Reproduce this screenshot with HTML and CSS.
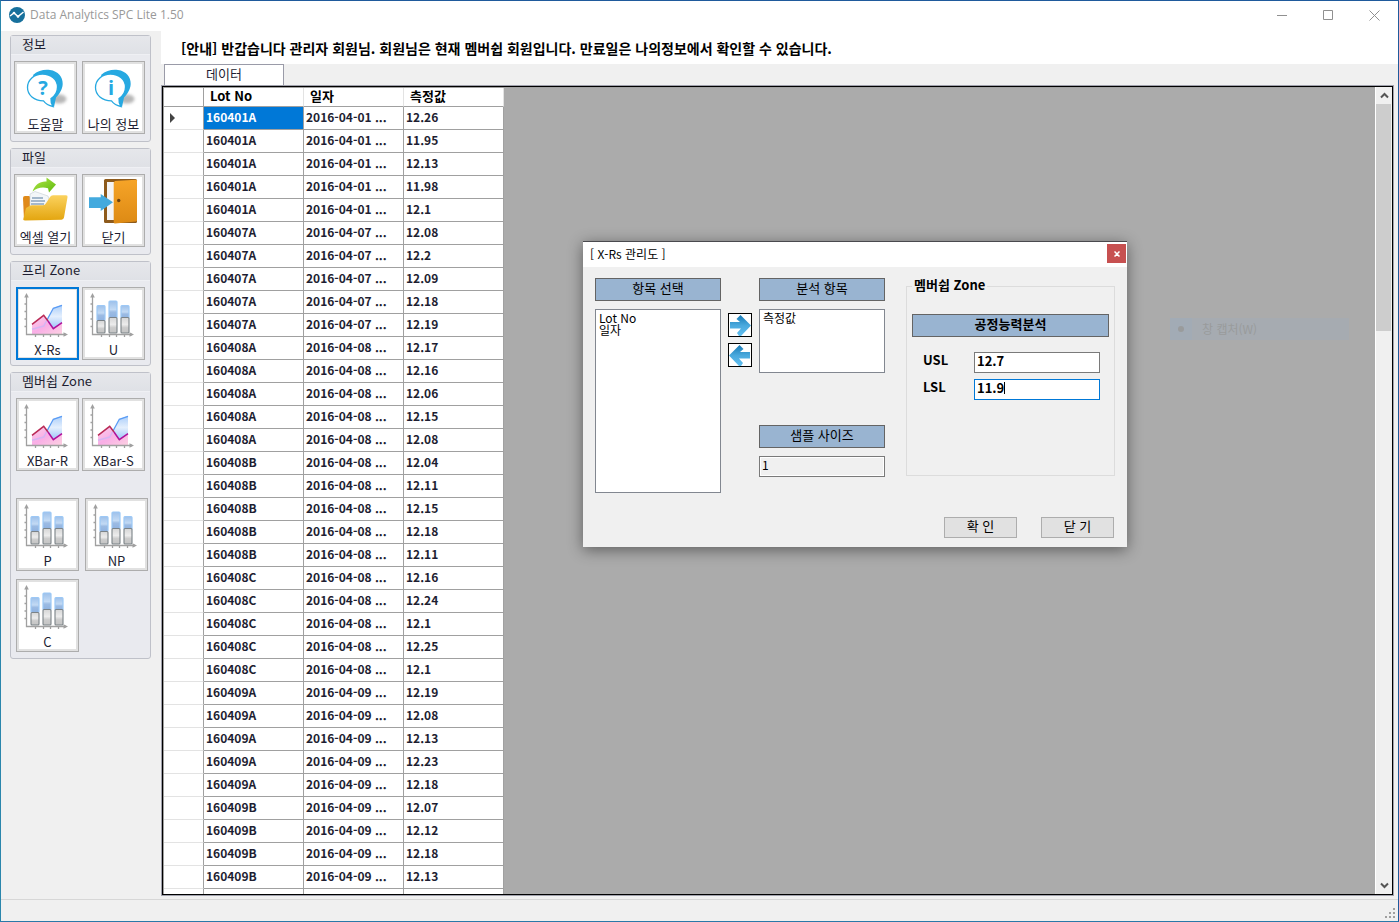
FILE: index.html
```html
<!DOCTYPE html>
<html lang="ko">
<head>
<meta charset="utf-8">
<title>Data Analytics SPC Lite 1.50</title>
<link rel="stylesheet" href="styles.css">
</head>
<body>
<svg class="defs" aria-hidden="true">
  <defs>
    <linearGradient id="g-blue" x1="0" y1="0" x2="0" y2="1"><stop offset="0" stop-color="#9dc0ea"/><stop offset=".5" stop-color="#c3daf4"/><stop offset=".65" stop-color="#9cbbe3"/><stop offset="1" stop-color="#8fb2e0"/></linearGradient>
    <linearGradient id="g-gray" x1="0" y1="0" x2="0" y2="1"><stop offset="0" stop-color="#d6d6d6"/><stop offset=".45" stop-color="#ececec"/><stop offset=".65" stop-color="#cccccc"/><stop offset="1" stop-color="#c4c4c4"/></linearGradient>
    <linearGradient id="g-area" x1="0" y1="0" x2="0" y2="1"><stop offset="0" stop-color="#a9cdfa"/><stop offset=".4" stop-color="#e4effd"/><stop offset=".8" stop-color="#9fc6f9"/></linearGradient>
    <linearGradient id="g-pink" x1="0" y1="0" x2="1" y2="1"><stop offset="0" stop-color="#fbd3ea"/><stop offset=".5" stop-color="#f9aee6"/><stop offset="1" stop-color="#fcd0e2"/></linearGradient>
    <linearGradient id="g-folder" x1="0" y1="0" x2="0" y2="1"><stop offset="0" stop-color="#fbd25e"/><stop offset="1" stop-color="#e3a50f"/></linearGradient>
    <linearGradient id="g-green" x1="0" y1="0" x2="1" y2="1"><stop offset="0" stop-color="#b4e84a"/><stop offset="1" stop-color="#5cb80c"/></linearGradient>
    <linearGradient id="g-door" x1="0" y1="0" x2="0" y2="1"><stop offset="0" stop-color="#f6a428"/><stop offset="1" stop-color="#dd8a14"/></linearGradient>
    <linearGradient id="g-arrow" x1="0" y1="0" x2="0" y2="1"><stop offset="0" stop-color="#1779b5"/><stop offset=".5" stop-color="#4aa9dd"/><stop offset="1" stop-color="#62bff0"/></linearGradient>
    <filter id="soft" x="-50%" y="-50%" width="200%" height="200%"><feGaussianBlur stdDeviation="1.5"/></filter>
    <symbol id="axes" viewBox="3 3 57 51">
      <path d="M10.500 9V47.500H50M8.500 17h2M8.500 24.500h2M8.500 32h2M8.500 39.500h2M19.500 48v2M27.500 48v2M34.500 48v2M42.500 48v2" fill="none" stroke="#a0a0a0" stroke-width="1.300"/>
      <path d="M10.500 6l2.300 4.500H8.200zM52 47.500l-4.500-2.300v4.600z" fill="#a0a0a0"/>
    </symbol>
    <symbol id="line-chart" viewBox="3 3 57 51">
      <path d="M27.700 39 37.300 21.300 46 17.700V47H27z" fill="url(#g-area)"/>
      <path d="M16 37.300 27.700 28.300 37.300 41.700 46 35.700V47H16z" fill="url(#g-pink)"/>
      <path d="M16 42.300 27.700 39 31 33" fill="none" stroke="#d5b6f2" stroke-width="1.500"/>
      <path d="M31 33 37.300 21.300 46 18.300" fill="none" stroke="#5a9cf4" stroke-width="1.300"/>
      <path d="M16 37.300 27.700 28.300 32 34" fill="none" stroke="#b92a56" stroke-width="1.500"/>
      <path d="M32 34 37.300 41.700 46 35.700" fill="none" stroke="#b0109a" stroke-width="1.500"/>
      <use href="#axes" x="3" y="3" width="57" height="51"/>
    </symbol>
    <symbol id="bar-chart" viewBox="3 3 57 51">
      <g fill="url(#g-blue)" stroke="#9cc8f6" stroke-width="1.200">
        <rect x="15" y="18.500" width="8" height="15" rx="1"/><rect x="27" y="14" width="8" height="17" rx="1"/><rect x="39" y="18.500" width="8" height="13" rx="1"/>
      </g>
      <g fill="url(#g-gray)" stroke="#7b8388" stroke-width="1.100">
        <rect x="15" y="33.500" width="8" height="12.500" rx="1"/><rect x="27" y="30.500" width="8" height="15.500" rx="1"/><rect x="39" y="30.500" width="8" height="15.500" rx="1"/>
      </g>
      <use href="#axes" x="3" y="3" width="57" height="51"/>
    </symbol>
    <symbol id="bubble" viewBox="3 3 57 51">
      <ellipse cx="45" cy="38" rx="7.500" ry="4.500" fill="#999" opacity=".7" filter="url(#soft)"/>
      <path d="M19 14C24 9.500 30 8.300 36 9 44 10 49 16 48.700 23 48.500 29 44.500 34 42 36.500L40 46 30 38z" fill="#27a9e1"/>
      <path d="M28.500 13C37 13 43.500 18.500 43.500 26 43.500 31 41 35 37 37.500 36.700 40.500 37.500 43 39 45.500 34.500 44.500 31.500 42.500 29.500 39.800 20 39.800 13.500 34 13.500 26.500S20 13 28.500 13z" fill="#fff" stroke="#27a9e1" stroke-width="1.300"/>
    </symbol>
    <symbol id="folder" viewBox="3 3 57 51">
      <path d="M9 24q0-2 2-2h4l3 2v20l-8 2z" fill="#e08a1a"/>
      <path d="M16 20 21 17.500 34 22 37 32 16 37z" fill="#f3f6f9" stroke="#c4ccd4" stroke-width=".6"/>
      <path d="M18 24h11M17 27h14M17 30h13" stroke="#8aa4bd" stroke-width="1.300"/>
      <path d="M12 34 15.500 32q1-.8 2.500-.8H29q2 0 3-2L36 23q1-1.700 3-1.700H52q2 0 1.500 2L50 43.500q-.4 2-2.500 2.300L11 46.500q-2.300 0-1.500-2.200z" fill="url(#g-folder)"/>
      <path d="M18.500 17.500C21 10.500 26 7 32.500 7.500V3.600L42 10.500 35 18.500 34 14.300C28 12.500 23 14 18.500 17.500z" fill="url(#g-green)"/>
    </symbol>
    <symbol id="door" viewBox="3 3 57 51">
      <rect x="22" y="5" width="33" height="44" rx="1.500" fill="#8d5a1c"/>
      <rect x="25" y="8" width="15" height="38" fill="#f4f4f6"/>
      <path d="M31.700 8.500 33 7 54 5.800q1 0 1 1V46.500q0 1-1 1L33 49.500q-1.300 0-1.300-1.500z" fill="url(#g-door)"/>
      <circle cx="36.700" cy="26.500" r="1.700" fill="#6b4212"/>
      <path d="M7 23.300H18.700V20L31 28.300 18.700 37V34H7z" fill="#44aade"/>
    </symbol>
    <symbol id="arrow" viewBox="0 0 22 22">
      <path d="M1 8H11L7.500 5 11.500 1 22 11.500 12 22H10L8 19 12 14.500H1z" fill="url(#g-arrow)"/>
    </symbol>
  </defs>
</svg>

<div class="app">
  <header class="titlebar">
    <svg class="logo" viewBox="0 0 16 16" aria-hidden="true"><circle cx="8" cy="8" r="8" fill="#17709c"/><path d="M1 9 5 6 9 9.500 14.500 5" fill="none" stroke="#fff" stroke-width="1.500"/><circle cx="5" cy="6" r="1.300" fill="#fff"/><circle cx="9" cy="9.500" r="1.300" fill="#fff"/></svg>
    <h1 class="app-title">Data Analytics SPC Lite 1.50</h1>
    <div class="window-buttons">
      <button class="win-btn" aria-label="최소화"><svg viewBox="0 0 11 11"><path d="M0 5.500h10" /></svg></button>
      <button class="win-btn" aria-label="최대화"><svg viewBox="0 0 11 11"><path d="M.5.5h9v9h-9z"/></svg></button>
      <button class="win-btn" aria-label="닫기"><svg viewBox="0 0 11 11"><path d="M.5.5l10 10M10.500.5l-10 10"/></svg></button>
    </div>
  </header>

  <div class="workspace">
    <nav class="sidebar">
      <section class="group">
        <h2 class="group-title">정보</h2>
        <div class="tools">
          <button class="tool"><svg class="tool-icon" viewBox="3 3 57 51"><use href="#bubble" x="3" y="3" width="57" height="51"/><text class="bubble-mark" x="29" y="34">?</text></svg>도움말</button>
          <button class="tool"><svg class="tool-icon" viewBox="3 3 57 51"><use href="#bubble" x="3" y="3" width="57" height="51"/><text class="bubble-mark" x="29" y="34">i</text></svg>나의 정보</button>
        </div>
      </section>
      <section class="group">
        <h2 class="group-title">파일</h2>
        <div class="tools">
          <button class="tool"><svg class="tool-icon"><use href="#folder"/></svg>엑셀 열기</button>
          <button class="tool"><svg class="tool-icon"><use href="#door"/></svg>닫기</button>
        </div>
      </section>
      <section class="group group-zone">
        <h2 class="group-title">프리 Zone</h2>
        <div class="tools">
          <button class="tool active"><svg class="tool-icon"><use href="#line-chart"/></svg>X-Rs</button>
          <button class="tool"><svg class="tool-icon"><use href="#bar-chart"/></svg>U</button>
        </div>
      </section>
      <section class="group group-zone group-member">
        <h2 class="group-title">멤버쉽 Zone</h2>
        <div class="tools">
          <button class="tool"><svg class="tool-icon"><use href="#line-chart"/></svg>XBar-R</button>
          <button class="tool"><svg class="tool-icon"><use href="#line-chart"/></svg>XBar-S</button>
        </div>
        <div class="tools tools-attribute">
          <button class="tool"><svg class="tool-icon"><use href="#bar-chart"/></svg>P</button>
          <button class="tool"><svg class="tool-icon"><use href="#bar-chart"/></svg>NP</button>
          <button class="tool"><svg class="tool-icon"><use href="#bar-chart"/></svg>C</button>
        </div>
      </section>
    </nav>

    <main class="content">
      <p class="notice">[안내] 반갑습니다 관리자 회원님. 회원님은 현재 멤버쉽 회원입니다. 만료일은 나의정보에서 확인할 수 있습니다.</p>
      <div class="tabs" role="tablist"><button class="tab" role="tab" aria-selected="true">데이터</button></div>
      <div class="grid-frame">
        <div class="grid-view">
          <table class="grid">
            <thead><tr><th class="row-head"></th><th>Lot No</th><th>일자</th><th>측정값</th></tr></thead>
            <tbody>
              <tr><td class="row-head current"><svg viewBox="0 0 5 10"><path d="M0 0l5 5-5 5z"/></svg></td><td class="selected">160401A</td><td>2016-04-01 ...</td><td>12.26</td></tr>
              <tr><td class="row-head"></td><td>160401A</td><td>2016-04-01 ...</td><td>11.95</td></tr>
              <tr><td class="row-head"></td><td>160401A</td><td>2016-04-01 ...</td><td>12.13</td></tr>
              <tr><td class="row-head"></td><td>160401A</td><td>2016-04-01 ...</td><td>11.98</td></tr>
              <tr><td class="row-head"></td><td>160401A</td><td>2016-04-01 ...</td><td>12.1</td></tr>
              <tr><td class="row-head"></td><td>160407A</td><td>2016-04-07 ...</td><td>12.08</td></tr>
              <tr><td class="row-head"></td><td>160407A</td><td>2016-04-07 ...</td><td>12.2</td></tr>
              <tr><td class="row-head"></td><td>160407A</td><td>2016-04-07 ...</td><td>12.09</td></tr>
              <tr><td class="row-head"></td><td>160407A</td><td>2016-04-07 ...</td><td>12.18</td></tr>
              <tr><td class="row-head"></td><td>160407A</td><td>2016-04-07 ...</td><td>12.19</td></tr>
              <tr><td class="row-head"></td><td>160408A</td><td>2016-04-08 ...</td><td>12.17</td></tr>
              <tr><td class="row-head"></td><td>160408A</td><td>2016-04-08 ...</td><td>12.16</td></tr>
              <tr><td class="row-head"></td><td>160408A</td><td>2016-04-08 ...</td><td>12.06</td></tr>
              <tr><td class="row-head"></td><td>160408A</td><td>2016-04-08 ...</td><td>12.15</td></tr>
              <tr><td class="row-head"></td><td>160408A</td><td>2016-04-08 ...</td><td>12.08</td></tr>
              <tr><td class="row-head"></td><td>160408B</td><td>2016-04-08 ...</td><td>12.04</td></tr>
              <tr><td class="row-head"></td><td>160408B</td><td>2016-04-08 ...</td><td>12.11</td></tr>
              <tr><td class="row-head"></td><td>160408B</td><td>2016-04-08 ...</td><td>12.15</td></tr>
              <tr><td class="row-head"></td><td>160408B</td><td>2016-04-08 ...</td><td>12.18</td></tr>
              <tr><td class="row-head"></td><td>160408B</td><td>2016-04-08 ...</td><td>12.11</td></tr>
              <tr><td class="row-head"></td><td>160408C</td><td>2016-04-08 ...</td><td>12.16</td></tr>
              <tr><td class="row-head"></td><td>160408C</td><td>2016-04-08 ...</td><td>12.24</td></tr>
              <tr><td class="row-head"></td><td>160408C</td><td>2016-04-08 ...</td><td>12.1</td></tr>
              <tr><td class="row-head"></td><td>160408C</td><td>2016-04-08 ...</td><td>12.25</td></tr>
              <tr><td class="row-head"></td><td>160408C</td><td>2016-04-08 ...</td><td>12.1</td></tr>
              <tr><td class="row-head"></td><td>160409A</td><td>2016-04-09 ...</td><td>12.19</td></tr>
              <tr><td class="row-head"></td><td>160409A</td><td>2016-04-09 ...</td><td>12.08</td></tr>
              <tr><td class="row-head"></td><td>160409A</td><td>2016-04-09 ...</td><td>12.13</td></tr>
              <tr><td class="row-head"></td><td>160409A</td><td>2016-04-09 ...</td><td>12.23</td></tr>
              <tr><td class="row-head"></td><td>160409A</td><td>2016-04-09 ...</td><td>12.18</td></tr>
              <tr><td class="row-head"></td><td>160409B</td><td>2016-04-09 ...</td><td>12.07</td></tr>
              <tr><td class="row-head"></td><td>160409B</td><td>2016-04-09 ...</td><td>12.12</td></tr>
              <tr><td class="row-head"></td><td>160409B</td><td>2016-04-09 ...</td><td>12.18</td></tr>
              <tr><td class="row-head"></td><td>160409B</td><td>2016-04-09 ...</td><td>12.13</td></tr>
              <tr><td class="row-head"></td><td></td><td></td><td></td></tr>
            </tbody>
          </table>
        </div>
        <div class="scrollbar">
          <button class="scroll-btn" aria-label="위로"><svg viewBox="0 0 9 7"><path d="M1 5.500 4.500 2 8 5.500"/></svg></button>
          <div class="scroll-track"><div class="scroll-thumb"></div></div>
          <button class="scroll-btn" aria-label="아래로"><svg viewBox="0 0 9 7"><path d="M1 1.500 4.500 5 8 1.500"/></svg></button>
        </div>
      </div>
    </main>
  </div>

  <footer class="statusbar"><svg class="grip" viewBox="0 0 11 11" aria-hidden="true"><path d="M8 0h2v2H8zM4 4h2v2H4zM8 4h2v2H8zM0 8h2v2H0zM4 8h2v2H4zM8 8h2v2H8z"/></svg></footer>

  <div class="ghost-item"><span class="ghost-mark"><span class="ghost-dot"></span></span>창 캡처(W)</div>

  <div class="dialog" role="dialog" aria-labelledby="dialog-title">
    <div class="dialog-head">
      <h2 class="dialog-title" id="dialog-title">[ X-Rs 관리도 ]</h2>
      <button class="dialog-close" aria-label="닫기"><svg viewBox="0 0 6 6"><path d="M.5.5l5 5M5.500.5l-5 5"/></svg></button>
    </div>
    <div class="dialog-body">
      <div class="column">
        <button class="caption">항목 선택</button>
        <select class="list list-source" multiple aria-label="항목 선택"><option>Lot No</option><option>일자</option></select>
      </div>
      <div class="movers">
        <button class="mover" aria-label="추가"><svg><use href="#arrow"/></svg></button>
        <button class="mover mover-back" aria-label="제거"><svg><use href="#arrow"/></svg></button>
      </div>
      <div class="column">
        <button class="caption">분석 항목</button>
        <select class="list list-target" multiple aria-label="분석 항목"><option>측정값</option></select>
        <button class="caption caption-sample">샘플 사이즈</button>
        <input class="field field-readonly" value="1" readonly aria-label="샘플 사이즈">
      </div>
      <fieldset class="member-zone">
        <legend>멤버쉽 Zone</legend>
        <button class="caption caption-bold">공정능력분석</button>
        <div class="limits">
          <label for="usl">USL</label><input class="field field-bold" id="usl" value="12.7">
          <label for="lsl">LSL</label><div class="field field-bold field-focus"><input id="lsl" value="11.9"><span class="caret"></span></div>
        </div>
      </fieldset>
    </div>
    <div class="dialog-actions">
      <button class="action">확 인</button>
      <button class="action">닫 기</button>
    </div>
  </div>
</div>
</body>
</html>
```

FILE: styles.css
```css
* {
  box-sizing: border-box;
}

body {
  margin: 0;
  font: 13px/16px "Noto Sans CJK KR", sans-serif;
  color: #1e1e32;
}

h1, h2, p {
  margin: 0;
  font-size: inherit;
  font-weight: normal;
}

button, input, select {
  margin: 0;
  padding: 0;
  border-radius: 0;
  font: inherit;
  color: inherit;
}

svg {
  display: block;
}

.defs {
  position: absolute;
  width: 0;
  height: 0;
}

.app {
  position: relative;
  display: flex;
  flex-direction: column;
  height: 100vh;
  background: #f0f0f0;
  border: 1px solid #1f5a9c;
  border-left-color: #2a86ac;
  border-bottom-color: #2a78a8;
}

/* Title bar */
.titlebar {
  display: flex;
  align-items: center;
  flex: none;
  height: 30px;
  padding: 0 1px 2px 8px;
  background: #fff;
}

.logo {
  width: 16px;
  height: 16px;
}

.app-title {
  flex: 1;
  padding-left: 5px;
  font-family: "Open Sans", sans-serif;
  font-size: 12px;
  color: #999;
}

.window-buttons {
  display: flex;
}

.win-btn {
  display: grid;
  place-items: center;
  width: 46px;
  height: 28px;
  background: none;
  border: 0;
}

.win-btn svg {
  width: 11px;
  height: 11px;
  fill: none;
  stroke: #909090;
}

/* Sidebar */
.workspace {
  display: flex;
  flex: 1;
  min-height: 0;
}

.sidebar {
  display: flex;
  flex-direction: column;
  gap: 6px;
  flex: none;
  width: 160px;
  padding: 4px 10px 0 9px;
}

.group {
  padding-bottom: 7px;
  background: #e9eaef;
  border: 1px solid #bfc1c9;
  border-radius: 3px;
}

.group-title {
  height: 19px;
  padding-left: 11px;
  background: linear-gradient(#e6e7eb, #dfe1e6);
  border-bottom: 1px solid #eff0f4;
}

.tools {
  display: flex;
  flex-wrap: wrap;
  gap: 5px;
  padding: 6px 0 0 3px;
}

.group-zone {
  padding-bottom: 5px;
}

.group-zone .tools {
  gap: 3px;
  padding-left: 5px;
}

.group-member {
  padding-bottom: 6px;
}

.group-zone .tools-attribute {
  gap: 8px 6px;
  padding-top: 27px;
}

.tool {
  display: flex;
  flex-direction: column;
  align-items: center;
  width: 63px;
  height: 73px;
  padding: 2px 2px 0;
  background: #fff;
  border: 1px solid #adadad;
  box-shadow: inset 0 0 0 2px #e1e1e1;
  line-height: 18px;
  white-space: nowrap;
}

.tool.active {
  border: 2px solid #0078d7;
  padding: 1px 1px 0;
  box-shadow: inset 0 0 0 1px #e1e1e1;
}

.tool-icon {
  flex: none;
  width: 57px;
  height: 51px;
}

.bubble-mark {
  font: bold 20px "Open Sans", sans-serif;
  fill: #27a9e1;
  text-anchor: middle;
}

/* Content */
.content {
  display: flex;
  flex-direction: column;
  flex: 1;
  min-width: 0;
  padding-bottom: 4px;
}

.notice {
  flex: none;
  height: 33px;
  padding: 9px 20px 0;
  background: #fff;
  color: #000;
  font-size: 14px;
  font-weight: bold;
}

.tabs {
  display: flex;
  flex: none;
  height: 21px;
  padding-left: 3px;
}

.tab {
  width: 120px;
  padding-bottom: 2px;
  background: #fff;
  border: 1px solid #9a9ba8;
  border-bottom: 0;
}

.grid-frame {
  display: flex;
  flex: 1;
  min-height: 0;
  margin: 1px 5px 0 1px;
  border: 1px solid #000;
  outline: 1px solid #a0a1ac;
}

.grid-view {
  flex: 1;
  overflow: hidden;
  background: #ababab;
  border-top: 1px solid #a0a0a0;
  border-left: 1px solid #a0a0a0;
}

.grid {
  border-collapse: separate;
  border-spacing: 0;
  table-layout: fixed;
  width: 340px;
  font-weight: bold;
}

.grid th {
  width: 100px;
  height: 19px;
  padding: 0 6px 2px;
  background: #fff;
  border-right: 1px solid #e3e3e3;
  border-bottom: 1px solid #a0a0a0;
  color: #000;
  text-align: left;
}

.grid td {
  height: 23px;
  padding: 0 2px 2px;
  background: #fff;
  border-right: 1px solid #a0a0a0;
  border-bottom: 1px solid #a0a0a0;
  font-size: 12px;
  white-space: nowrap;
}

.grid .row-head {
  width: 40px;
  padding: 0;
  border-right-color: #a0a0a0;
}

.grid td.row-head {
  border-bottom-color: #e3e3e3;
}

.grid .current svg {
  width: 5px;
  height: 10px;
  margin-left: 6px;
  fill: #444;
}

.grid .selected {
  background: #0078d7;
  color: #fff;
}

.scrollbar {
  display: flex;
  flex-direction: column;
  flex: none;
  width: 17px;
  background: #f0f0f0;
  border-left: 1px solid #fff;
}

.scroll-btn {
  display: grid;
  place-items: center;
  height: 17px;
  background: none;
  border: 0;
}

.scroll-btn svg {
  width: 9px;
  height: 7px;
  fill: none;
  stroke: #555;
  stroke-width: 2px;
}

.scroll-track {
  flex: 1;
}

.scroll-thumb {
  width: 15px;
  height: 29.400%;
  background: #cdcdcd;
}

.statusbar {
  display: flex;
  justify-content: flex-end;
  align-items: flex-end;
  flex: none;
  height: 22px;
  padding: 2px;
  border-top: 1px solid #d7d7d7;
}

.grip {
  width: 11px;
  height: 11px;
  fill: #a0a0a0;
}

/* Fading menu entry over the grid */
.ghost-item {
  position: absolute;
  top: 317px;
  right: 49px;
  display: flex;
  align-items: center;
  gap: 10px;
  width: 179px;
  height: 22px;
  background: #a6abb1;
  color: #999b9c;
  font-size: 12px;
}

.ghost-mark {
  display: grid;
  place-items: center;
  width: 22px;
  height: 22px;
  background: #a2abb5;
}

.ghost-dot {
  width: 6px;
  height: 6px;
  border-radius: 50%;
  background: #999b9c;
}

/* Dialog */
.dialog {
  position: absolute;
  top: 240px;
  left: 582px;
  width: 544px;
  background: #f0f0f0;
  border-top: 1px solid #4a4a4e;
  box-shadow: 0 3px 14px rgba(0, 0, 0, .45);
  color: #000;
}

.dialog-head {
  display: flex;
  justify-content: space-between;
  align-items: center;
  height: 25px;
  padding: 0 1px 2px 7px;
  background: #fff;
}

.dialog-title {
  font-size: 12px;
}

.dialog-close {
  display: grid;
  place-items: center;
  width: 19px;
  height: 19px;
  background: #c75050;
  border: 0;
}

.dialog-close svg {
  width: 6px;
  height: 6px;
  fill: none;
  stroke: #fff;
  stroke-width: 1.500px;
}

.dialog-body {
  display: flex;
  padding: 11px 12px 0;
}

.column {
  display: flex;
  flex-direction: column;
  width: 126px;
}

.caption {
  height: 23px;
  padding-bottom: 3px;
  background: #99b4d1;
  border: 1px solid #646464;
}

.list {
  margin-top: 8px;
  padding: 1px 0;
  background: #fff;
  border: 1px solid #828790;
  outline: 0;
  overflow: hidden;
}

.list option {
  display: flex;
  align-items: center;
  height: 12px;
  min-height: 12px;
  padding: 0 3px;
  font-size: 12px;
}

.list-source {
  height: 184px;
}

.list-target {
  height: 64px;
}

.movers {
  display: flex;
  flex-direction: column;
  gap: 6px;
  padding: 35px 7px 0;
}

.mover {
  width: 24px;
  height: 24px;
  background: #fff;
  border: 1px solid #000;
}

.mover svg {
  width: 22px;
  height: 22px;
}

.mover-back svg {
  transform: scaleX(-1);
}

.caption-sample {
  margin-top: 52px;
}

.field {
  width: 126px;
  height: 21px;
  padding: 0 2px 4px;
  background: #fff;
  border: 1px solid #7a7a7a;
  outline: 0;
}

.field-readonly {
  margin-top: 8px;
  background: #f0f0f0;
  box-shadow: inset 0 0 0 1px #fff;
  font-size: 12px;
}

.field-bold {
  font-size: 13px;
  font-weight: bold;
}

.field-focus {
  display: flex;
  align-items: center;
  border-color: #0078d7;
}

.field-focus input {
  field-sizing: content;
  border: 0;
  outline: 0;
  background: none;
}

.caret {
  width: 1px;
  height: 12px;
  background: #000;
}

.member-zone {
  display: flex;
  flex-direction: column;
  flex: 1;
  height: 198px;
  min-width: 0;
  margin: 0 0 0 21px;
  padding: 20px 5px 0;
  border: 1px solid #dcdcdc;
}

.member-zone legend {
  padding: 0 2px 3px;
  line-height: 13px;
  font-weight: bold;
}

.caption-bold {
  width: 100%;
  font-weight: bold;
}

.limits {
  display: grid;
  grid-template-columns: 51px 126px;
  gap: 6px 0;
  padding: 15px 0 0 11px;
  font-weight: bold;
}

.dialog-actions {
  display: flex;
  justify-content: flex-end;
  gap: 24px;
  padding: 24px 13px 9px;
}

.action {
  width: 73px;
  height: 21px;
  padding-bottom: 3px;
  background: #e1e1e1;
  border: 1px solid #adadad;
}
```
